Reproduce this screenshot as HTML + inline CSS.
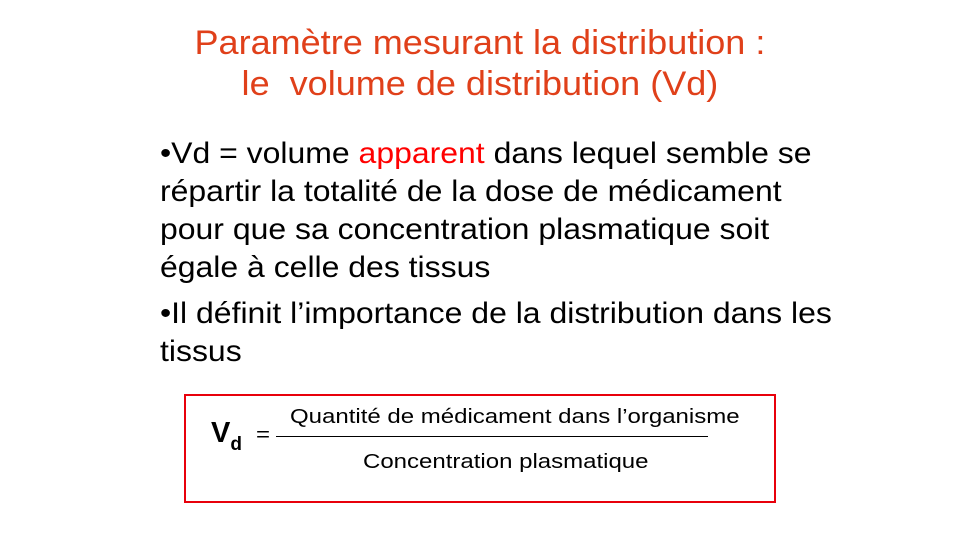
<!DOCTYPE html>
<html><head><meta charset="utf-8"><style>
body{margin:0;width:960px;height:540px;background:#fff;position:relative;overflow:hidden;font-family:"Liberation Sans",sans-serif}
.t{position:absolute;white-space:nowrap;line-height:1}
.title{color:#e0401a;font-size:34px;left:0;width:960px;text-align:center;transform:scaleX(1.06);transform-origin:481px 0}
.b{font-size:30px;color:#000;left:160px;transform:scaleX(1.065);transform-origin:0 0}
.r{color:#ff0000}
.box{position:absolute;left:184px;top:394px;width:588px;height:105px;border:2px solid #e8000b}
.f{font-size:20px;color:#000;transform:scaleX(1.2);transform-origin:0 0}
</style></head><body>
<div class="t title" style="top:26px">Paramètre mesurant la distribution :</div>
<div class="t title" style="top:67px">le&nbsp; volume de distribution (Vd)</div>
<div class="t b" style="top:139px">•Vd = volume <span class="r">apparent</span> dans lequel semble se</div>
<div class="t b" style="top:177px">répartir la totalité de la dose de médicament</div>
<div class="t b" style="top:215px">pour que sa concentration plasmatique soit</div>
<div class="t b" style="top:253px">égale à celle des tissus</div>
<div class="t b" style="top:299px">•Il définit l’importance de la distribution dans les</div>
<div class="t b" style="top:337px">tissus</div>
<div class="box"></div>
<div class="t" style="left:211px;top:419px;font-size:29px;font-weight:bold">V<span style="font-size:19px;position:relative;top:8px">d</span></div>
<div class="t f" style="left:256px;top:425px">=</div>
<div class="t f" style="left:290px;top:407px">Quantité de médicament dans l’organisme</div>
<div style="position:absolute;left:276px;top:436px;width:432px;height:1px;background:#000"></div>
<div class="t f" style="left:363px;top:452px">Concentration plasmatique</div>
</body></html>
